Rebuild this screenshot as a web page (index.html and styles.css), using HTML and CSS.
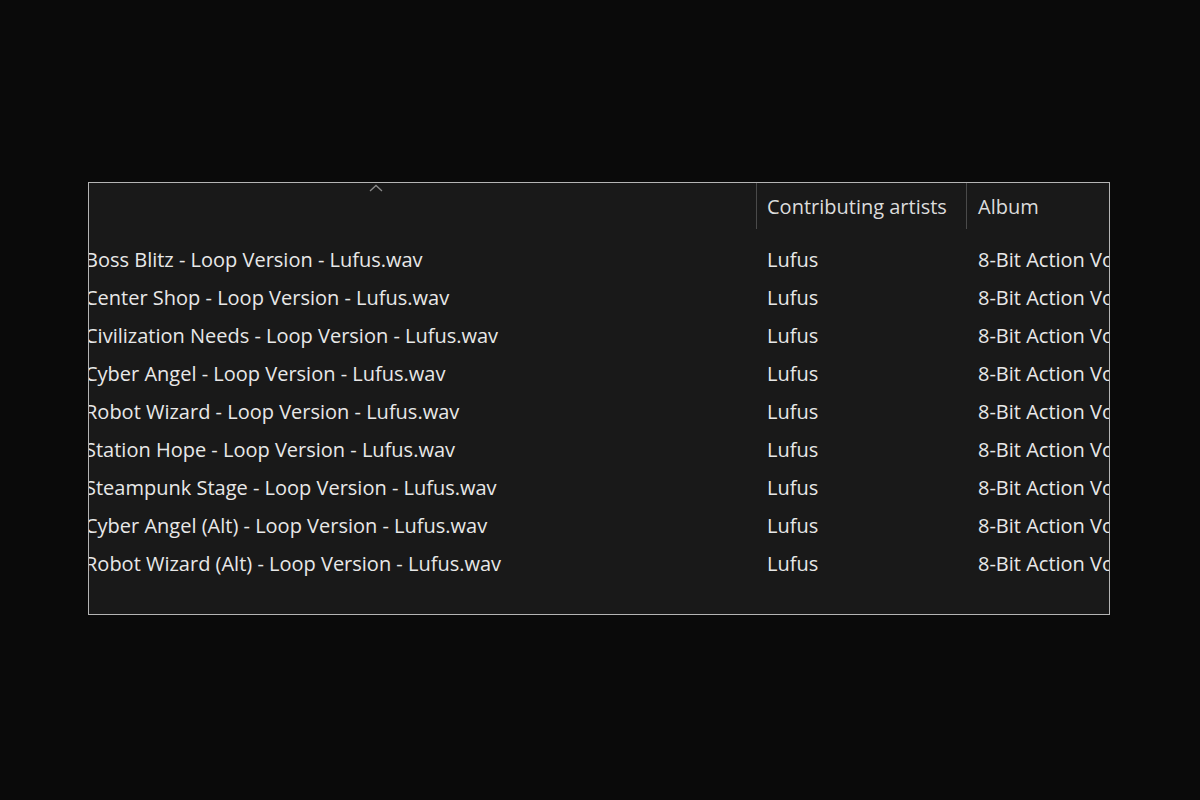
FILE: index.html
```html
<!DOCTYPE html>
<html>
<head>
<meta charset="utf-8">
<link rel="stylesheet" href="styles.css">
</head>
<body>
<div class="stage">
  <div class="list">
    <div class="header">
      <div class="col name-col head-name">
        <svg class="sort" width="14" height="8" viewBox="0 0 14 8"><path d="M1 7 L7 1.5 L13 7" fill="none" stroke="#8a8a8a" stroke-width="1.3"/></svg>
      </div>
      <div class="col artist-col head-cell">Contributing artists</div>
      <div class="col album-col head-cell">Album</div>
    </div>
    <div class="rows">
      <div class="row"><div class="col name-col"><span class="name">Boss Blitz - Loop Version - Lufus.wav</span></div><div class="col artist-col">Lufus</div><div class="col album-col">8-Bit Action Vol. 2</div></div>
      <div class="row"><div class="col name-col"><span class="name">Center Shop - Loop Version - Lufus.wav</span></div><div class="col artist-col">Lufus</div><div class="col album-col">8-Bit Action Vol. 2</div></div>
      <div class="row"><div class="col name-col"><span class="name">Civilization Needs - Loop Version - Lufus.wav</span></div><div class="col artist-col">Lufus</div><div class="col album-col">8-Bit Action Vol. 2</div></div>
      <div class="row"><div class="col name-col"><span class="name">Cyber Angel - Loop Version - Lufus.wav</span></div><div class="col artist-col">Lufus</div><div class="col album-col">8-Bit Action Vol. 2</div></div>
      <div class="row"><div class="col name-col"><span class="name">Robot Wizard - Loop Version - Lufus.wav</span></div><div class="col artist-col">Lufus</div><div class="col album-col">8-Bit Action Vol. 2</div></div>
      <div class="row"><div class="col name-col"><span class="name">Station Hope - Loop Version - Lufus.wav</span></div><div class="col artist-col">Lufus</div><div class="col album-col">8-Bit Action Vol. 2</div></div>
      <div class="row"><div class="col name-col"><span class="name">Steampunk Stage - Loop Version - Lufus.wav</span></div><div class="col artist-col">Lufus</div><div class="col album-col">8-Bit Action Vol. 2</div></div>
      <div class="row"><div class="col name-col"><span class="name">Cyber Angel (Alt) - Loop Version - Lufus.wav</span></div><div class="col artist-col">Lufus</div><div class="col album-col">8-Bit Action Vol. 2</div></div>
      <div class="row"><div class="col name-col"><span class="name">Robot Wizard (Alt) - Loop Version - Lufus.wav</span></div><div class="col artist-col">Lufus</div><div class="col album-col">8-Bit Action Vol. 2</div></div>
    </div>
  </div>
</div>
</body>
</html>
```
FILE: styles.css
```css
html, body {
  margin: 0;
  padding: 0;
  background: #0a0a0a;
  width: 1200px;
  height: 800px;
  overflow: hidden;
}
.stage {
  padding: 182px 0 0 88px;
}
.list {
  width: 1020px;
  height: 431px;
  border: 1px solid #b4b4b4;
  background: #191919;
  overflow: hidden;
  font-family: "Open Sans", "Noto Sans", sans-serif;
  font-size: 20px;
  color: #e8e8e8;
}
.header {
  display: flex;
  height: 46px;
}
.col {
  flex: none;
  white-space: nowrap;
  overflow: hidden;
  box-sizing: border-box;
}
.name-col {
  width: 667px;
}
.artist-col {
  width: 210px;
  padding-left: 10px;
}
.album-col {
  width: 143px;
  padding-left: 11px;
}
.head-name {
  display: flex;
  justify-content: flex-start;
  align-items: flex-start;
  padding-top: 1px;
  padding-left: 280px;
}
.sort {
  display: block;
}
.head-cell {
  border-left: 1px solid #4a4a4a;
  line-height: 46px;
  padding-top: 1px;
  color: #dcdcdc;
}
.rows {
  padding-top: 12px;
}
.row {
  display: flex;
  height: 38px;
  line-height: 38px;
}
.row .artist-col {
  padding-left: 11px;
}
.row .album-col {
  padding-left: 12px;
}
.name {
  display: inline-block;
  margin-left: -4px;
}
```
